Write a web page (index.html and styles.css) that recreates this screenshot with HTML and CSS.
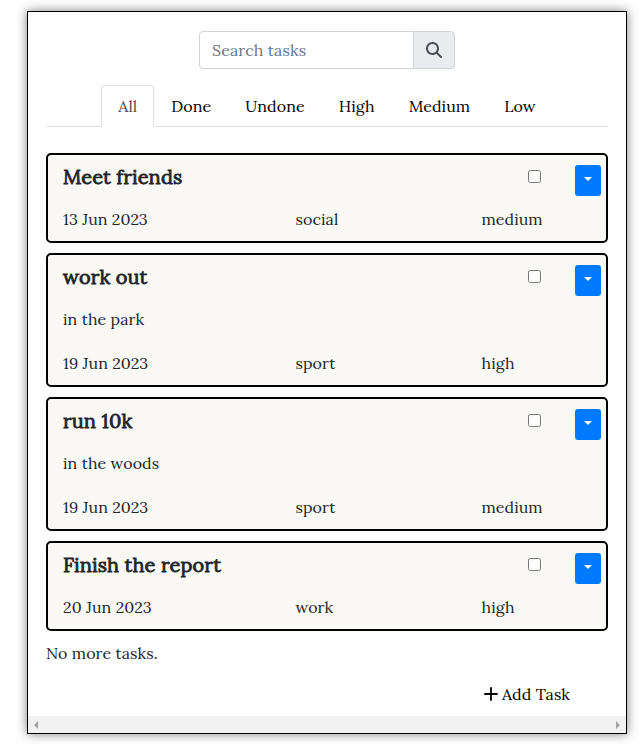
FILE: index.html
```
<!DOCTYPE html>
<html lang="en">
<head>
<meta charset="utf-8">
<title>Tasks</title>
<link rel="stylesheet" href="styles.css">
</head>
<body>
<main class="panel">
  <div class="content">
    <form class="search">
      <input class="search-input" type="text" placeholder="Search tasks">
      <span class="search-addon"><svg width="16" height="16" viewBox="0 0 512 512"><path fill="currentColor" d="M416 208c0 45.900-14.900 88.300-40 122.700L502.600 457.400c12.500 12.500 12.500 32.800 0 45.300s-32.800 12.500-45.300 0L330.700 376c-34.400 25.200-76.800 40-122.700 40C93.100 416 0 322.900 0 208S93.100 0 208 0S416 93.100 416 208zM208 352a144 144 0 1 0 0-288 144 144 0 1 0 0 288z"/></svg></span>
    </form>
    <nav class="tabs">
      <a class="tab active">All</a>
      <a class="tab">Done</a>
      <a class="tab">Undone</a>
      <a class="tab">High</a>
      <a class="tab">Medium</a>
      <a class="tab">Low</a>
    </nav>
    <section class="tasks">
      <article class="card">
        <div class="head"><h2 class="title">Meet friends</h2><input class="check" type="checkbox"><button class="menu"><span class="caret"></span></button></div>
        <div class="meta"><span>13 Jun 2023</span><span>social</span><span>medium</span></div>
      </article>
      <article class="card">
        <div class="head"><h2 class="title">work out</h2><input class="check" type="checkbox"><button class="menu"><span class="caret"></span></button></div>
        <p class="desc">in the park</p>
        <div class="meta"><span>19 Jun 2023</span><span>sport</span><span>high</span></div>
      </article>
      <article class="card">
        <div class="head"><h2 class="title">run 10k</h2><input class="check" type="checkbox"><button class="menu"><span class="caret"></span></button></div>
        <p class="desc">in the woods</p>
        <div class="meta"><span>19 Jun 2023</span><span>sport</span><span>medium</span></div>
      </article>
      <article class="card">
        <div class="head"><h2 class="title">Finish the report</h2><input class="check" type="checkbox"><button class="menu"><span class="caret"></span></button></div>
        <div class="meta"><span>20 Jun 2023</span><span>work</span><span>high</span></div>
      </article>
    </section>
    <p class="end">No more tasks.</p>
    <a class="add"><svg width="14" height="14" viewBox="0 0 14 14"><path d="M7 1v12M1 7h12" fill="none" stroke="currentColor" stroke-width="1.800" stroke-linecap="round"/></svg><span>Add Task</span></a>
  </div>
  <div class="scrollbar">
    <svg width="4" height="8" viewBox="0 0 4 8"><path fill="#a3a3a3" d="M4 0v8L0 4z"/></svg>
    <svg width="4" height="8" viewBox="0 0 4 8"><path fill="#a3a3a3" d="M0 0v8L4 4z"/></svg>
  </div>
</main>
</body>
</html>
```
FILE: styles.css
```
* { box-sizing: border-box; }
body {
  margin: 0;
  min-height: 746px;
  padding: 11px 0 0 27px;
  background: #fff;
  color: #212529;
  font: 16px/24px Lora, "Liberation Serif", serif;
  letter-spacing: .07px;
}
.panel {
  display: flex;
  flex-direction: column;
  width: 600px;
  height: 723px;
  border: 1px solid #000;
  background: #fff;
  box-shadow: 0 0 10px rgba(0, 0, 0, .5);
}
.content { flex: 1; padding: 19px 18px 0; }
.search { display: flex; width: 256px; height: 38px; margin: 0 auto 16px; }
.search-input {
  flex: 1;
  min-width: 0;
  padding: 0 12px;
  border: 1px solid #ced4da;
  border-radius: 4px 0 0 4px;
  background: #fff;
  font: inherit;
  letter-spacing: .1px;
}
.search-input::placeholder { color: #6c757d; opacity: 1; }
.search-addon {
  display: flex;
  align-items: center;
  justify-content: center;
  width: 42px;
  margin-left: -1px;
  border: 1px solid #ced4da;
  border-radius: 0 4px 4px 0;
  background: #e9ecef;
  color: #495057;
}
.tabs {
  display: flex;
  justify-content: center;
  height: 42px;
  margin-bottom: 26px;
  border-bottom: 1px solid #dee2e6;
}
.tab {
  height: 42px;
  padding: 8px 16px;
  border: 1px solid transparent;
  border-radius: 4px 4px 0 0;
  color: #000;
  white-space: nowrap;
}
.tab.active {
  border-color: #dee2e6 #dee2e6 #fff;
  background: #fff;
  color: #495057;
}
.tasks { display: flex; flex-direction: column; gap: 10px; }
.card {
  padding: 10px 5px 10px 15px;
  border: 2px solid #000;
  border-radius: 5px;
  background: #faf9f6;
}
.head { display: flex; align-items: flex-start; height: 24px; margin-bottom: 18px; }
.title {
  flex: 1;
  margin: 0;
  font-size: 20px;
  font-weight: 400;
  line-height: 24px;
  letter-spacing: .12px;
  -webkit-text-stroke: .8px currentColor;
}
.check { width: 13px; height: 13px; margin: 5px 34px 0 0; }
.menu {
  display: flex;
  justify-content: center;
  flex: none;
  width: 26px;
  height: 31px;
  padding: 12px 0 0;
  border: 0;
  border-radius: 3px;
  background: #007bff;
}
.caret { border: 4.800px solid transparent; border-top-color: #fff; border-bottom: 0; }
.desc { margin: 0 0 20px; }
.meta { display: grid; grid-template-columns: 232.500px 186px 1fr; }
.end { margin: 10px 0 17px; }
.add { display: flex; align-items: center; gap: 4px; margin-left: 438px; color: #000; }
.scrollbar {
  display: flex;
  align-items: center;
  justify-content: space-between;
  height: 17px;
  padding: 0 6px;
  background: #f1f1f1;
}
```
